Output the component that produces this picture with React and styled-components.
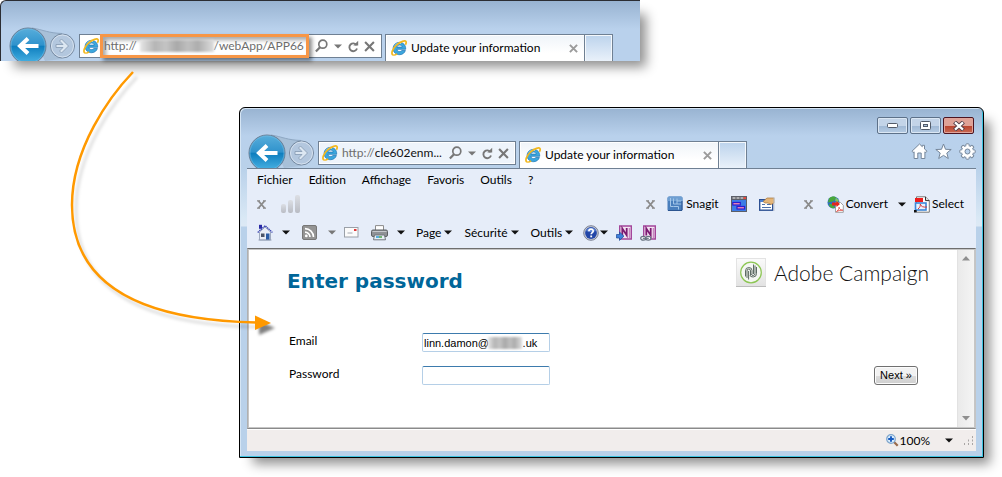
import React from "react";
import styled, { createGlobalStyle, css } from "styled-components";

const GlobalStyle = createGlobalStyle`
  *, *::before, *::after { box-sizing: border-box; }
  body {
    margin: 0;
    background: #fff;
    color: #000;
    font-family: Lato, "Open Sans", sans-serif;
    font-size: 12px;
    line-height: 16px;
  }
  button, input { font: inherit; color: inherit; }
  svg { display: block; flex: none; }
`;

/* ---------- page ---------- */

const Stage = styled.main`
  position: relative;
  overflow: hidden;
  padding-bottom: 18px;
`;

const frameFill = css`
  background: linear-gradient(#98b3d1, #b9d1ec 28px, #b9d1ea 60px, #d9e8f5 110px, #dde9f5 118px, #b9d1ea 119px);
`;

const SnippetFrame = styled.section`
  margin-right: 362px;
  padding: 26px 0 0 7px;
  border: solid #2b2d33;
  border-width: 1px 0 0 1px;
  border-top-left-radius: 6px;
  background: linear-gradient(#98b3d1, #b9d1ec 28px);
  box-shadow: 10px 10px 12px -4px rgba(0, 0, 0, 0.44);
`;

const WindowFrame = styled.section`
  margin: 46px 18px 0 239px;
  padding: 9px 7px 6px;
  border: 1px solid #000;
  border-radius: 6px 6px 0 0;
  box-shadow: inset -1px -1px 0 #3cc3e0, inset 1px 1px 0 #d5e5f4,
    10px 10px 12px -4px rgba(0, 0, 0, 0.44);
  ${frameFill}
`;

const ArrowOverlay = styled.svg`
  position: absolute;
  left: 60px;
  top: 60px;
  pointer-events: none;
`;

/* ---------- title bar ---------- */

const Caption = styled.div`
  display: flex;
  justify-content: flex-end;
  gap: 2px;
  padding-right: 2px;
`;

const CaptionButton = styled.button`
  display: flex;
  align-items: center;
  justify-content: center;
  width: 31px;
  height: 17px;
  padding: 0;
  border: 1px solid ${(p) => (p.$danger ? "#4c1420" : "#5d7189")};
  border-radius: 2px;
  box-shadow: inset 0 0 0 1px ${(p) => (p.$danger ? "#e0a49b" : "#dbe7f4")};
  background: ${(p) =>
    p.$danger
      ? "linear-gradient(#dfa297 50%, #b8412c 50%, #c96a54)"
      : "linear-gradient(#c3d4e8 50%, #9fb8d4 50%, #b6cce4)"};
`;

/* ---------- navigation row ---------- */

const NavRow = styled.div`
  display: flex;
  align-items: flex-end;
  height: 34px;
`;

const AddressBar = styled.div`
  display: flex;
  align-items: center;
  flex: none;
  width: ${(p) => p.$width}px;
  height: 24px;
  margin: 0 3px 3px 0;
  padding: 0 6px 0 3px;
  border: 1px solid #6f8093;
  box-shadow: inset 0 0 0 1px #fff;
  background: ${(p) => p.$fill};
  color: #6d6d6d;
`;

const UrlBox = styled.label`
  position: relative;
  display: flex;
  align-items: center;
  flex: 1;
  min-width: 0;
  margin-right: 2px;
  padding-left: 4px;
  ${(p) =>
    p.$marked &&
    css`
      flex: none;
      width: 209px;
      height: 24px;
      margin-left: 1px;
      padding-left: 1px;
      border: 3px solid #f79646;
      box-shadow: 3px 3px 4px rgba(0, 0, 0, 0.45), inset 3px 3px 4px rgba(0, 0, 0, 0.35);
    `}
`;

const UrlInput = styled.input`
  flex: 1;
  min-width: 0;
  padding: 0;
  border: 0;
  outline: 0;
  background: transparent;
  color: ${(p) => p.$color};
`;

const Redaction = styled.span`
  position: absolute;
  left: ${(p) => p.$left}px;
  top: 50%;
  width: ${(p) => p.$width}px;
  height: 12px;
  margin-top: -6px;
  background: linear-gradient(90deg, #e6e6e6, #b5b5b5 20%, #c4c4c4 35%, #a9a9a9 50%, #bfbfbf 65%, #adadad 78%, #dedede);
  filter: blur(1px);
`;

const BarTools = styled.div`
  display: flex;
  align-items: center;
  margin-left: auto;
`;

const IconButton = styled.button`
  display: flex;
  align-items: center;
  flex: none;
  margin: 0 0 0 ${(p) => p.$before || 0}px;
  padding: 0;
  border: 0;
  background: none;
  text-align: left;
`;

const Tab = styled.div`
  display: flex;
  align-items: center;
  gap: 4px;
  flex: none;
  width: 200px;
  height: 27px;
  padding: 0 6px 0 5px;
  border: solid #6f8093;
  border-width: 1px 1px 0;
  background: linear-gradient(#eff4f9, #fff 18px);
  box-shadow: inset 1px 1px 0 #fff;
`;

const TabTitle = styled.span`
  flex: 1;
  white-space: nowrap;
`;

const NewTab = styled.button`
  flex: none;
  width: 28px;
  height: 27px;
  padding: 0;
  border: solid #6f8093;
  border-width: 1px 1px 0 0;
  background: linear-gradient(#bcd3ec, #e9f1fa);
  box-shadow: inset 1px 1px 0 #f4f8fc, inset -1px 0 0 #f4f8fc;
`;

const WindowTools = styled.div`
  display: flex;
  align-items: center;
  gap: 7px;
  height: 34px;
  margin-left: auto;
`;

/* ---------- tool bars ---------- */

const Bars = styled.div`
  border-top: 1px solid #6f8093;
  background: #e6edf9;
`;

const MenuBar = styled.nav`
  display: flex;
  align-items: center;
  gap: 16px;
  height: 22px;
  padding-left: 10px;
`;

const ToolRow = styled.div`
  display: flex;
  align-items: center;
  height: ${(p) => p.$height}px;
  padding: 0 12px 0 10px;
`;

const Push = styled.div`
  display: flex;
  align-items: center;
  margin-left: auto;
`;

const TextTool = styled(IconButton)`
  gap: ${(p) => p.$gap || 3}px;
`;

/* ---------- page content ---------- */

const Viewport = styled.div`
  display: flex;
  min-height: 181px;
  border: 1px solid #6e6e6e;
  border-color: #6e6e6e #c4c4c4 #8a8a8a #b0b0b0;
  box-shadow: inset 0 0 0 1px #c6c6c6;
  background: #fff;
  padding: 1px;
`;

const Page = styled.div`
  flex: 1;
  padding: 8px 28px 0 38px;
`;

const PageHead = styled.header`
  display: flex;
  align-items: flex-start;
  justify-content: space-between;
`;

const Title = styled.h1`
  margin: 10px 0 0;
  color: #069;
  font: bold 20px/26px "DejaVu Sans", sans-serif;
`;

const Brand = styled.div`
  display: flex;
  align-items: center;
  gap: 8px;
  color: #111;
  font: 300 21px/30px Lato, sans-serif;
`;

const Form = styled.form`
  display: flex;
  align-items: flex-end;
  justify-content: space-between;
  margin: 39px 11px 0 2px;
`;

const Fields = styled.div`
  display: grid;
  grid-template-columns: 133px 128px;
  row-gap: 14px;
`;

const Field = styled.div`
  position: relative;
`;

const TextField = styled.input`
  display: block;
  width: 128px;
  height: 19px;
  padding: 0 1px;
  border: 1px solid #b5cfe7;
  border-top-color: #3d7bad;
  border-radius: 2px;
  font: 11px/15px "Liberation Sans", sans-serif;
`;

const NextButton = styled.button`
  width: 44px;
  height: 19px;
  padding: 0;
  border: 1px solid #707070;
  border-radius: 3px;
  background: linear-gradient(#f2f2f2 50%, #dcdcdc 50%, #cfcfcf);
  box-shadow: inset 0 0 0 1px #fcfcfc;
  font: 11px/15px "Liberation Sans", sans-serif;
`;

const ScrollTrack = styled.div`
  display: flex;
  flex-direction: column;
  align-items: center;
  justify-content: space-between;
  width: 17px;
  padding: 6px 0;
  border-left: 1px solid #e2e2e2;
  background: linear-gradient(90deg, #eaeaea, #f4f4f4);
`;

const StatusBar = styled.footer`
  display: flex;
  align-items: center;
  justify-content: flex-end;
  height: 22px;
  padding: 0 2px 0 0;
  border-top: 1px solid #fff;
  background: #f1edec;
`;

/* ---------- drawings ---------- */

const BackForward = ({ id }) => (
  <svg width="71" height="34" viewBox="0 0 71 34">
    <defs>
      <linearGradient id={id} x1="0" y1="0" x2="0" y2="1">
        <stop offset="0" stopColor="#58aedb" />
        <stop offset=".48" stopColor="#2f92cc" />
        <stop offset=".5" stopColor="#0d7dbd" />
        <stop offset="1" stopColor="#4cb5e6" />
      </linearGradient>
    </defs>
    <path d="M22 1.500C34 2 38 6 54 6.500V32L37 34z" fill="#a3b9d2" opacity=".75" />
    <path d="M24 1C36 3 40 6 54 6.500" fill="none" stroke="#8da6c1" />
    <circle cx="20" cy="19" r="18" fill={`url(#${id})`} stroke="#6d7f95" />
    <circle cx="20" cy="19" r="17" fill="none" stroke="#74bde2" opacity=".6" />
    <path d="M30.500 19H12M20 11.500L12 19L20 26.500" fill="none" stroke="#fff" strokeWidth="4" />
    <circle cx="54.500" cy="19" r="12" fill="#b3c7de" stroke="#75889f" />
    <circle cx="54.500" cy="19" r="11" fill="none" stroke="#d6e2ef" />
    <path d="M48 17.500h7l-3.500-3.500 2-2 7 7-7 7-2-2 3.500-3.500h-7z" fill="#dce7f2" stroke="#8398b0" strokeWidth=".8" />
  </svg>
);

const ExplorerLogo = () => (
  <svg width="16" height="16" viewBox="0 0 16 16">
    <path
      d="M14.700 9.300H5.900c.2 1.500 1.300 2.300 2.700 2.300 1 0 1.800-.4 2.200-1.100h3.600c-.8 2.600-3 4.200-5.900 4.200-3.700 0-6.400-2.600-6.400-6.100 0-3.600 2.700-6.200 6.300-6.200 3.900 0 6.500 2.700 6.300 6.900zM5.900 7.100h5.300C11 5.800 10 5 8.600 5 7.200 5 6.200 5.800 5.900 7.100z"
      fill="#3ba7dd"
      stroke="#1b73b5"
      strokeWidth=".7"
    />
    <path d="M4 5.500C5.500 3.300 8 2.900 10 3.500" fill="none" stroke="#a6dcf5" />
    <path
      d="M2.200 15C-.5 14 1.500 8.500 6 4.700 9.800 1.500 14 .1 14.900 1.500c.5.800.2 2.100-.5 3.300"
      fill="none"
      stroke="#f2b81f"
      strokeWidth="1.700"
    />
    <path d="M2.200 15c1.200.3 2.700-.2 4-1.100" fill="none" stroke="#f2b81f" strokeWidth="1.400" />
  </svg>
);

const SearchGlyph = () => (
  <svg width="13" height="14" viewBox="0 0 13 14">
    <circle cx="7.800" cy="5.200" r="4" fill="none" stroke="#777" strokeWidth="1.700" />
    <path d="M5 8.200L.9 12.600" stroke="#777" strokeWidth="2.200" />
  </svg>
);

const Caret = ({ color = "#111" }) => (
  <svg width="8" height="5" viewBox="0 0 8 5">
    <path d="M0 .5h8L4 4.500z" fill={color} />
  </svg>
);

const RefreshGlyph = () => (
  <svg width="11" height="13" viewBox="0 0 11 13">
    <path d="M8.600 5.200A3.900 3.900 0 1 0 9 8.500" fill="none" stroke="#777" strokeWidth="1.900" />
    <path d="M5.300 5.600h4.900V.8z" fill="#777" />
  </svg>
);

const Cross = ({ size, color, weight }) => (
  <svg width={size} height={size} viewBox="0 0 10 10">
    <path d="M1 1l8 8M9 1L1 9" stroke={color} strokeWidth={weight} />
  </svg>
);

const BarClose = () => (
  <svg width="9" height="9" viewBox="0 0 9 9">
    <path d="M0 .8h3M6 .8h3M0 8.200h3M6 8.200h3" stroke="#8b8b8b" strokeWidth="1.200" />
    <path d="M1.500 1l6 7M7.500 1l-6 7" stroke="#8b8b8b" strokeWidth="1.900" />
  </svg>
);

const HomeOutline = () => (
  <svg width="17" height="17" viewBox="0 0 17 17">
    <path
      d="M1 8.200L8.500 1l2.800 2.700V2.300h2.200V6L16 8.200l-1.200 1.400-.9-.8V15.500h-3.700V10H6.800v5.500H3.100V8.800l-.9.8z"
      fill="#fff"
      stroke="#75869a"
    />
  </svg>
);

const StarOutline = () => (
  <svg width="17" height="17" viewBox="0 0 17 17">
    <path
      d="M8.500 1l2 5.300 5.700.2-4.400 3.500 1.500 5.500-4.800-3.100-4.800 3.100 1.500-5.500L.8 6.500l5.700-.2z"
      fill="#fff"
      stroke="#75869a"
    />
  </svg>
);

const GearOutline = () => (
  <svg width="17" height="17" viewBox="0 0 17 17">
    <g fill="#fff" stroke="#75869a">
      {[0, 45, 90, 135].map((a) => (
        <rect key={a} x="6.800" y=".8" width="3.400" height="15.400" rx="1" transform={`rotate(${a} 8.500 8.500)`} />
      ))}
    </g>
    <circle cx="8.500" cy="8.500" r="5.500" fill="#fff" />
    <circle cx="8.500" cy="8.500" r="2.500" fill="#b9d1ec" stroke="#75869a" />
  </svg>
);

const SignalBars = () => (
  <svg width="20" height="20" viewBox="0 0 20 20">
    <defs>
      <linearGradient id="signal" x1="0" y1="0" x2="0" y2="1">
        <stop offset="0" stopColor="#dcdfe5" />
        <stop offset="1" stopColor="#b9bcc4" />
      </linearGradient>
    </defs>
    <g fill="url(#signal)">
      <rect x="0" y="10" width="5" height="9" rx="2" />
      <rect x="7" y="6" width="5" height="13" rx="2" />
      <rect x="14" y="1" width="5" height="18" rx="2" />
    </g>
  </svg>
);

const SnagitIcon = () => (
  <svg width="16" height="16" viewBox="0 0 16 16">
    <rect x=".5" y=".5" width="15" height="14.500" rx="1.500" fill="#4a7fbd" />
    <path d="M.5 2.500Q.5.500 2.500.5H14q1.500 0 1.500 1.500v3H.5z" fill="#6f9fd2" />
    <path d="M3.500 2v8.500h3M6.500 2.500V8h8M10 2.500V8M6.500 10.500h5v3M10 5h4.500" fill="none" stroke="#a3c6e8" />
    <path d="M1 14.500h14M15 5v9" stroke="#2c5590" />
  </svg>
);

const WindowsIcon = () => (
  <svg width="16" height="16" viewBox="0 0 16 16">
    <rect width="16" height="16" fill="#5c5f68" />
    <rect x="1" y="4" width="14" height="11" fill="#3c7be6" />
    <path d="M1.500 2h11" stroke="#c7c7c7" strokeWidth="1.500" strokeDasharray="3 1" />
    <rect x="12.500" y="1" width="2.500" height="2" fill="#e6483d" />
    <rect x="1.800" y="6.500" width="7.500" height="2.500" fill="#f58bb4" stroke="#2a1cd0" strokeWidth="1.200" />
    <rect x="6" y="10.500" width="7.500" height="2.500" fill="#f58bb4" stroke="#2a1cd0" strokeWidth="1.200" />
  </svg>
);

const NotesIcon = () => (
  <svg width="16" height="16" viewBox="0 0 16 16">
    <rect x=".7" y="3.700" width="13" height="10.500" fill="#fff" stroke="#2c4f92" strokeWidth="1.400" />
    <path d="M1 5h8" stroke="#4c7fd0" strokeWidth="2" />
    <path d="M3 8.500h3M3 11.500h9M8 8.500h4" stroke="#4d70aa" strokeWidth="1.200" />
    <path d="M4 5.500L8 2h7v5l-3 1.500-3-1.500H6z" fill="#e4b579" stroke="#a87438" strokeWidth=".7" />
    <path d="M15 1v14" stroke="#c3c8d0" />
  </svg>
);

const ConvertIcon = () => (
  <svg width="17" height="17" viewBox="0 0 17 17">
    <circle cx="6.500" cy="6.500" r="6" fill="#2f6fc0" />
    <path d="M2 2.500C4 0 8 0 9 1.500L7 5 3.500 6 1 6.500zM2 8l4 0 2 4-3 .3C3 11.500 2 10 2 8z" fill="#48a83a" />
    <path d="M9 1.500l3 3-2 2-2-2z" fill="#7fc65f" />
    <path d="M8.500 6.500h5l2.800 2.800v7h-7.800z" fill="#fff" stroke="#8d8d8d" strokeWidth=".8" />
    <path d="M5 6.500h4.500V5l3.500 3-3.500 3V9.500H5z" fill="#e4261c" />
    <path d="M9.500 15.500c2-1.500 2.700-3 2.500-4.300.5 2 2 3 3.800 3-2 0-4.500.3-6.300 1.300z" fill="none" stroke="#dd3b34" strokeWidth=".8" />
  </svg>
);

const SelectIcon = () => (
  <svg width="16" height="17" viewBox="0 0 16 17">
    <path d="M2.500.8h9l3.800 3.800v11.600H2.500z" fill="#fff" stroke="#777" />
    <path d="M11.500.8v3.800h3.800" fill="#ddd" stroke="#333" />
    <rect x="1" y="2" width="8" height="4" fill="#ed1c1c" />
    <rect x="1.500" y="7" width="10.500" height="7" fill="#e8f2fd" stroke="#3c86d8" strokeWidth="1.600" />
    <path d="M4 13c2-1.500 2.500-3.500 2.300-5C7 10.500 9 11.500 13 11" fill="none" stroke="#d93a3a" />
    <rect x="0" y="14" width="2.500" height="2.500" fill="#111" />
  </svg>
);

const HouseIcon = () => (
  <svg width="16" height="17" viewBox="0 0 16 17">
    <rect x="2" y=".8" width="3" height="4" fill="#2929a5" />
    <path d="M2.500 8L8 3l5.500 5v8h-11z" fill="#e9eef6" stroke="#8b98b0" strokeWidth=".8" />
    <path d="M.7 8.500L8.200 1.700l7.200 6.800" fill="none" stroke="#3c45b0" strokeWidth="1.300" strokeDasharray="1.500 .6" />
    <rect x="4" y="9.500" width="3.500" height="3.500" fill="#4b5567" />
    <rect x="9" y="9.500" width="3.500" height="6.500" fill="#2b5da5" />
    <path d="M1.500 16h13" stroke="#98a3b8" />
  </svg>
);

const FeedIcon = () => (
  <svg width="15" height="15" viewBox="0 0 15 15">
    <rect x=".5" y=".5" width="14" height="14" rx="1.500" fill="#949494" stroke="#777" />
    <circle cx="4.300" cy="10.900" r="1.400" fill="#fff" />
    <path d="M3 7.100a5 5 0 0 1 5 5M3 3.600a8.500 8.500 0 0 1 8.500 8.500" fill="none" stroke="#fff" strokeWidth="1.600" />
  </svg>
);

const MailIcon = () => (
  <svg width="15" height="11" viewBox="0 0 15 11">
    <rect x=".5" y=".5" width="13.500" height="9.500" fill="#fbfbfb" stroke="#9aa0a8" />
    <path d="M3.500 6h5" stroke="#a4a9b0" />
    <rect x="10" y="2" width="2.500" height="2" fill="#e03535" />
  </svg>
);

const PrinterIcon = () => (
  <svg width="17" height="16" viewBox="0 0 17 16">
    <path d="M4.500 6V.6h8V6z" fill="#fff" stroke="#8c8c8c" />
    <rect x=".5" y="5" width="16" height="6.500" rx="1.500" fill="#8f9296" stroke="#5d6064" />
    <path d="M1.500 6.500h14" stroke="#c5c8cc" />
    <path d="M3.500 10h10l1 4.800h-12z" fill="#e6f0f6" stroke="#72777c" />
    <path d="M5 12h3" stroke="#2b98d4" strokeWidth="1.500" />
    <path d="M8 12h3" stroke="#48a348" strokeWidth="1.500" />
  </svg>
);

const HelpIcon = () => (
  <svg width="16" height="16" viewBox="0 0 16 16">
    <circle cx="8" cy="8" r="7.300" fill="#c8ccd8" stroke="#7b8294" />
    <circle cx="8" cy="8" r="5.900" fill="#2347a8" />
    <path d="M3 6a5.500 5.500 0 0 1 10 0q-5 2-10 0z" fill="#5c83d2" />
    <path d="M5.900 6.300c0-3 4.300-2.800 4.300-.3 0 1.600-2 1.600-2 3.300" fill="none" stroke="#fff" strokeWidth="1.700" />
    <rect x="7.300" y="10.500" width="1.800" height="1.800" fill="#fff" />
  </svg>
);

const NoteIcon = ({ linked }) => (
  <svg width="16" height="16" viewBox="0 0 16 16">
    <path d="M3.700 1h11.600v13H3.700z" fill="#f4e3f2" stroke="#a3469a" strokeWidth="1.400" />
    <path d="M13.500 3v10" stroke="#c78ac1" strokeWidth="1.500" />
    <path d="M6.300 10.500v-7l4.400 6.800V3" fill="none" stroke="#7c1a72" strokeWidth="1.800" />
    {linked ? (
      <g fill="#fff" stroke="#66717f" strokeWidth="1.200">
        <ellipse cx="3.300" cy="13.300" rx="2.600" ry="1.900" />
        <ellipse cx="8.300" cy="13.300" rx="2.600" ry="1.900" />
        <path d="M2.800 13.300h6" />
      </g>
    ) : (
      <path d="M.5 9.500h3V7l4.500 4.200-4.500 4.200V13h-3z" fill="#3f80dc" stroke="#1d4a96" strokeWidth=".7" />
    )}
  </svg>
);

const CampaignLogo = () => (
  <svg width="30" height="30" viewBox="0 0 30 30">
    <defs>
      <linearGradient id="tile" x1="0" y1="0" x2="0" y2="1">
        <stop offset="0" stopColor="#fbfbfb" />
        <stop offset="1" stopColor="#e2e2e2" />
      </linearGradient>
    </defs>
    <rect x=".5" y=".5" width="29" height="28" fill="url(#tile)" stroke="#e3e3e3" />
    <path d="M0 28.500h30" stroke="#bcbcbc" />
    <circle cx="15" cy="14.500" r="10.300" fill="#f5f7f3" stroke="#8cc653" strokeWidth="1.200" />
    <g fill="none" stroke="#4c5a52" strokeWidth=".9">
      <path d="M9.500 18.500V13q0-3.500 3.300-3.500t3.200 3v3.500" />
      <path d="M11 20V13q0-2 1.800-2t1.700 2v4" />
      <path d="M12.600 21.500V13" />
      <path d="M20.500 9v6.500q0 3.500-3.300 3.500t-3.200-2" />
      <path d="M19 7.500v8q0 2-1.800 2t-1.700-1.500" />
      <path d="M17.500 6.500V16" />
    </g>
  </svg>
);

const ZoomIcon = () => (
  <svg width="13" height="13" viewBox="0 0 13 13">
    <path d="M7.500 7.500l4.200 4.300" stroke="#9a6a4a" strokeWidth="2.200" />
    <circle cx="5" cy="5" r="4.300" fill="#d9ecfc" stroke="#7ea5cc" strokeWidth="1.200" />
    <path d="M5 2.200v5.600M2.200 5h5.600" stroke="#1559c0" strokeWidth="1.900" />
  </svg>
);

const ScrollArrow = ({ down }) => (
  <svg width="8" height="5" viewBox="0 0 8 5">
    <path d={down ? "M0 0h8L4 4.500z" : "M0 4.500h8L4 0z"} fill="#8f8f8f" />
  </svg>
);

const Grip = () => (
  <svg width="10" height="10" viewBox="0 0 10 10">
    <path d="M8 1h1M8 4.500h1M8 8h1M4 4.500h1M4 8h1M0 8h1" stroke="#a9a6a5" strokeWidth="2" />
  </svg>
);

/* ---------- parts ---------- */

const AddressTools = () => (
  <BarTools>
    <IconButton aria-label="Search"><SearchGlyph /></IconButton>
    <IconButton $before={6} aria-label="Show address list"><Caret color="#777" /></IconButton>
    <IconButton $before={6} aria-label="Refresh"><RefreshGlyph /></IconButton>
    <IconButton $before={5} aria-label="Stop"><Cross size={11} color="#777" weight={1.9} /></IconButton>
  </BarTools>
);

const PageTab = () => (
  <>
    <Tab>
      <ExplorerLogo />
      <TabTitle>Update your information</TabTitle>
      <IconButton aria-label="Close tab"><Cross size={9} color="#9b9b9b" weight={2.2} /></IconButton>
    </Tab>
    <NewTab aria-label="New tab" />
  </>
);

const gap = (n) => "\u00a0".repeat(n);
const menus = ["Fichier", "Edition", "Affichage", "Favoris", "Outils", "?"];

export default function App() {
  return (
    <>
      <GlobalStyle />
      <Stage>
        <SnippetFrame>
          <NavRow>
            <BackForward id="back-top" />
            <AddressBar $width={303} $fill="#fff">
              <ExplorerLogo />
              <UrlBox $marked>
                <UrlInput
                  $color="#6d6d6d"
                  aria-label="Page address"
                  defaultValue={`http://${gap(25)}/webApp/APP66`}
                />
                <Redaction $left={37} $width={74} />
              </UrlBox>
              <AddressTools />
            </AddressBar>
            <PageTab />
          </NavRow>
        </SnippetFrame>

        <WindowFrame>
          <Caption>
            <CaptionButton aria-label="Minimize">
              <svg width="11" height="5" viewBox="0 0 11 5">
                <rect x=".5" y=".5" width="10" height="4" rx="1" fill="#fff" stroke="#535b68" />
              </svg>
            </CaptionButton>
            <CaptionButton aria-label="Maximize">
              <svg width="11" height="9" viewBox="0 0 11 9">
                <rect x=".5" y=".5" width="10" height="8" rx="1" fill="#fff" stroke="#535b68" />
                <rect x="3.500" y="3.500" width="4" height="2" fill="#a9c0da" stroke="#535b68" />
              </svg>
            </CaptionButton>
            <CaptionButton $danger aria-label="Close">
              <svg width="12" height="10" viewBox="0 0 12 10">
                <path d="M1.500 1l9 8M10.500 1l-9 8" stroke="#53404a" strokeWidth="4.200" />
                <path d="M2 1.400l8 7.200M10 1.400L2 8.600" stroke="#fff" strokeWidth="2.200" />
              </svg>
            </CaptionButton>
          </Caption>

          <NavRow>
            <BackForward id="back-main" />
            <AddressBar $width={198} $fill="#eef4fb">
              <ExplorerLogo />
              <UrlBox>
                <span>http://</span>
                <UrlInput $color="#111" aria-label="Address" defaultValue="cle602enm..." />
              </UrlBox>
              <AddressTools />
            </AddressBar>
            <PageTab />
            <WindowTools>
              <IconButton aria-label="Home"><HomeOutline /></IconButton>
              <IconButton aria-label="Favorites"><StarOutline /></IconButton>
              <IconButton aria-label="Tools"><GearOutline /></IconButton>
            </WindowTools>
          </NavRow>

          <Bars>
            <MenuBar>
              {menus.map((m) => (
                <IconButton key={m}>{m}</IconButton>
              ))}
            </MenuBar>
            <ToolRow $height={26}>
              <IconButton aria-label="Close toolbar"><BarClose /></IconButton>
              <IconButton $before={15} aria-label="Signal"><SignalBars /></IconButton>
              <Push>
                <IconButton aria-label="Close Snagit bar"><BarClose /></IconButton>
                <TextTool $before={12}><SnagitIcon />Snagit</TextTool>
                <IconButton $before={12} aria-label="Snagit window"><WindowsIcon /></IconButton>
                <IconButton $before={12} aria-label="Snagit notes"><NotesIcon /></IconButton>
                <IconButton $before={29} aria-label="Close convert bar"><BarClose /></IconButton>
                <TextTool $before={14} $gap={2}><ConvertIcon />Convert</TextTool>
                <IconButton $before={10} aria-label="Convert options"><Caret /></IconButton>
                <TextTool $before={8} $gap={2}><SelectIcon />Select</TextTool>
              </Push>
            </ToolRow>
            <ToolRow $height={31}>
              <IconButton aria-label="Home page"><HouseIcon /></IconButton>
              <IconButton $before={9} aria-label="Home page options"><Caret /></IconButton>
              <IconButton $before={12} aria-label="Feeds"><FeedIcon /></IconButton>
              <IconButton $before={11} aria-label="Feed options"><Caret color="#777" /></IconButton>
              <IconButton $before={8} aria-label="Read mail"><MailIcon /></IconButton>
              <IconButton $before={12} aria-label="Print"><PrinterIcon /></IconButton>
              <IconButton $before={9} aria-label="Print options"><Caret /></IconButton>
              <TextTool $before={11}>Page<Caret /></TextTool>
              <TextTool $before={12}>Sécurité<Caret /></TextTool>
              <TextTool $before={12}>Outils<Caret /></TextTool>
              <TextTool $before={10} $gap={1} aria-label="Help"><HelpIcon /><Caret /></TextTool>
              <IconButton $before={8} aria-label="Send to OneNote"><NoteIcon /></IconButton>
              <IconButton $before={8} aria-label="Linked notes"><NoteIcon linked /></IconButton>
            </ToolRow>
          </Bars>

          <Viewport>
            <Page>
              <PageHead>
                <Title>Enter password</Title>
                <Brand>
                  <CampaignLogo />
                  Adobe Campaign
                </Brand>
              </PageHead>
              <Form onSubmit={(e) => e.preventDefault()}>
                <Fields>
                  <label htmlFor="email">Email</label>
                  <Field>
                    <TextField id="email" defaultValue={`linn.damon@${gap(11)}.uk`} />
                    <Redaction $left={66} $width={34} />
                  </Field>
                  <label htmlFor="password">Password</label>
                  <Field>
                    <TextField id="password" type="password" />
                  </Field>
                </Fields>
                <NextButton>Next »</NextButton>
              </Form>
            </Page>
            <ScrollTrack>
              <ScrollArrow />
              <ScrollArrow down />
            </ScrollTrack>
          </Viewport>

          <StatusBar>
            <TextTool $gap={1}><ZoomIcon />100%</TextTool>
            <IconButton $before={15} aria-label="Zoom level"><Caret /></IconButton>
            <IconButton $before={11} as="span"><Grip /></IconButton>
          </StatusBar>
        </WindowFrame>

        <ArrowOverlay width="230" height="290" viewBox="60 60 230 290">
          <defs>
            <filter id="soft" x="-10%" y="-10%" width="120%" height="120%">
              <feGaussianBlur stdDeviation="1.500" />
            </filter>
          </defs>
          <g filter="url(#soft)">
            <path d="M137 77C114 101 76 153 76 210C76 290 144 325 258 327" fill="none" stroke="#000" strokeOpacity=".12" strokeWidth="3" />
            <path d="M259 321l16 7-16 7z" fill="#000" fillOpacity=".5" />
          </g>
          <path d="M133 72C110 96 72 148 72 205C72 285 140 320 256 322.500" fill="none" stroke="#f90" strokeWidth="2.500" />
          <path d="M255 315.500l16 7.500-16 7z" fill="#f90" />
        </ArrowOverlay>
      </Stage>
    </>
  );
}
